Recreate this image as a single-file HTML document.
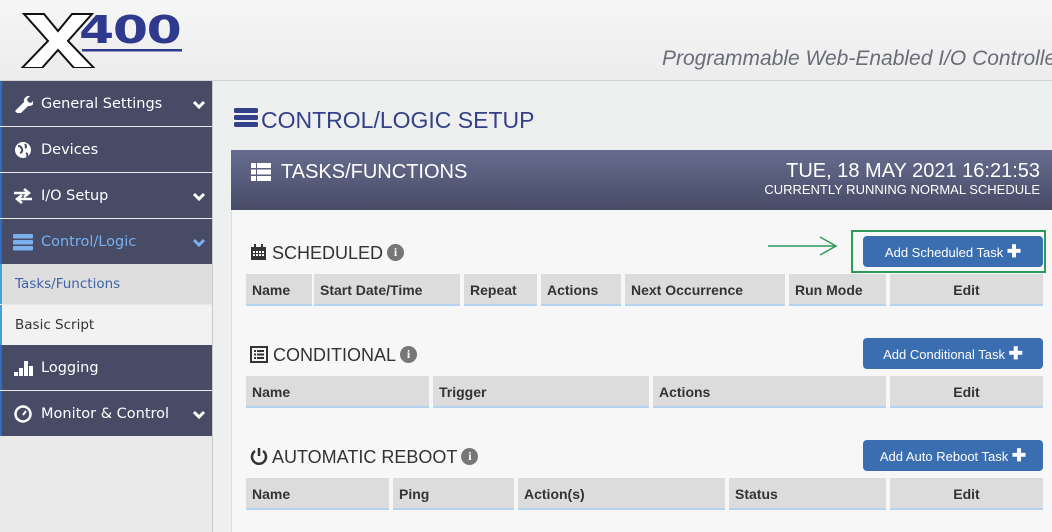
<!DOCTYPE html>
<html><head><meta charset="utf-8"><style>
*{box-sizing:border-box;margin:0;padding:0}
body{width:1052px;height:532px;overflow:hidden;position:relative;font-family:"Liberation Sans",sans-serif;background:#eeefef}
.a{position:absolute}
#hdr{left:0;top:0;width:1052px;height:81px;background:linear-gradient(#f6f6f6,#ececec);border-bottom:1px solid #d4d4d4}
.tag{left:662px;top:47px;font-size:21px;font-style:italic;color:#6a6d78;white-space:nowrap}
#side{left:0;top:81px;width:213px;height:451px;background:#e9e9ea;border-right:1px solid #c9c9c9}
.it{position:absolute;left:0;width:212px;background:#474b66;color:#fff;font-family:"DejaVu Sans",sans-serif;font-size:14.5px;border-left:2px solid #2d6cc0}
.it span{position:absolute;left:39px;top:50%;transform:translateY(-50%)}
.it i{position:absolute;left:11px;top:50%;transform:translateY(-50%);width:20px;height:18px}
.it b{position:absolute;right:6px;top:50%;transform:translateY(-60%);width:14px;height:10px}
.sub{position:absolute;left:0;width:212px;font-family:"DejaVu Sans",sans-serif;font-size:13.5px;border-left:2px solid #45a0e0}
.sub span{position:absolute;left:13px;top:50%;transform:translateY(-50%)}
.ttl{left:261px;top:107px;font-size:23px;color:#34418a}
#pnl{left:231px;top:150px;width:821px;height:382px;background:#f7f7f7;border-left:1px solid #ddd}
#ph{left:231px;top:150px;width:821px;height:60px;background:linear-gradient(#676d8e,#474b66);color:#fff}
.sec{font-size:18px;color:#333;white-space:nowrap}
.th{position:absolute;height:32px;background:#dcdcdc;border-bottom:2px solid #b5d3f0;font-size:14px;font-weight:bold;color:#333;line-height:32px;padding-left:6px}
.btn{position:absolute;left:863px;width:180px;height:31px;background:#3a6eb0;border-radius:4px;color:#fff;font-size:13px;line-height:31px;text-align:center}
.info{display:inline-block;width:17px;height:17px;border-radius:50%;background:#777;color:#fff;font-size:12px;font-weight:bold;text-align:center;line-height:17px;font-family:"Liberation Serif",serif;vertical-align:3px;margin-left:4px}
.logo4{left:79px;top:8px;font-family:"DejaVu Sans",sans-serif;font-weight:bold;font-size:38px;line-height:44px;color:#2f3a8f;transform:scaleX(1.33);transform-origin:left top;letter-spacing:-1px}
</style></head><body>
<div id="hdr" class="a"></div>
<svg class="a" style="left:20px;top:10px" width="170" height="58">
<path d="M4 4h20l14 17 14-17h20l-24 27 26 27h-20l-16-18-16 18h-20l26-27z" fill="#fff" stroke="#111" stroke-width="2"/>
<rect x="62" y="39" width="100" height="2.5" fill="#2f3a8f"/>
</svg>
<div class="a logo4">400</div>
<div class="a tag">Programmable Web-Enabled I/O Controller</div>
<div id="side" class="a"></div>
<div class="it" style="top:81px;height:45px"><i><svg width="20" height="18"><path d="M2 16l9-9a5 5 0 0 1 6-6l-3 3 1 3 3 1 3-3a5 5 0 0 1-6 6l-9 9z" fill="#fff"/></svg></i><span>General Settings</span><b><svg width="14" height="10"><path d="M2 2l5 5 5-5" stroke="#fff" stroke-width="3" fill="none"/></svg></b></div>
<div class="it" style="top:127px;height:45px"><i><svg width="20" height="18"><circle cx="10" cy="9" r="8" fill="#fff"/><path d="M5 5q3 0 4 3t-2 4M12 3q2 3 0 4M13 12q2 1 1 4" stroke="#474b66" stroke-width="2" fill="none"/></svg></i><span>Devices</span></div>
<div class="it" style="top:173px;height:45px"><i><svg width="20" height="18"><path d="M1 6h14M11 2l5 4-5 4M19 12H5M9 8l-5 4 5 4" stroke="#fff" stroke-width="2.5" fill="none"/></svg></i><span>I/O Setup</span><b><svg width="14" height="10"><path d="M2 2l5 5 5-5" stroke="#fff" stroke-width="3" fill="none"/></svg></b></div>
<div class="it" style="top:219px;height:45px;color:#7ab0ee"><i><svg width="20" height="18"><rect x="0" y="1" width="20" height="4.5" rx="1" fill="#7ab0ee"/><rect x="0" y="7" width="20" height="4.5" rx="1" fill="#7ab0ee"/><rect x="0" y="13" width="20" height="4.5" rx="1" fill="#7ab0ee"/></svg></i><span>Control/Logic</span><b><svg width="14" height="10"><path d="M2 2l5 5 5-5" stroke="#7ab0ee" stroke-width="3" fill="none"/></svg></b></div>
<div class="sub" style="top:264px;height:40px;background:#dedede;color:#3f62a8"><span>Tasks/Functions</span></div>
<div class="sub" style="top:305px;height:40px;background:#f2f2f2;color:#333"><span>Basic Script</span></div>
<div class="it" style="top:345px;height:45px"><i><svg width="20" height="18"><g fill="#fff"><rect x="1" y="13" width="4" height="4"/><rect x="6" y="9" width="4" height="8"/><rect x="11" y="2" width="4" height="15"/><rect x="16" y="7" width="4" height="10"/></g></svg></i><span>Logging</span></div>
<div class="it" style="top:391px;height:45px"><i><svg width="20" height="18"><circle cx="10" cy="9" r="7.5" fill="none" stroke="#fff" stroke-width="2.5"/><path d="M10 10l3-4" stroke="#fff" stroke-width="2"/></svg></i><span>Monitor &amp; Control</span><b><svg width="14" height="10"><path d="M2 2l5 5 5-5" stroke="#fff" stroke-width="3" fill="none"/></svg></b></div>
<svg class="a" style="left:234px;top:108px" width="24" height="20"><rect y="0" width="24" height="5" rx="1.5" fill="#34418a"/><rect y="7" width="24" height="5" rx="1.5" fill="#34418a"/><rect y="14" width="24" height="5" rx="1.5" fill="#34418a"/></svg>
<div class="a ttl">CONTROL/LOGIC SETUP</div>
<div id="pnl" class="a"></div>
<div id="ph" class="a">
<svg class="a" style="left:20px;top:13px" width="20" height="18"><g fill="#fff"><rect x="0" y="0" width="5" height="5"/><rect x="6" y="0" width="14" height="5"/><rect x="0" y="6.5" width="5" height="5"/><rect x="6" y="6.5" width="14" height="5"/><rect x="0" y="13" width="5" height="5"/><rect x="6" y="13" width="14" height="5"/></g></svg>
<div class="a" style="left:50px;top:11px;font-size:20px">TASKS/FUNCTIONS</div>
<div class="a" style="right:12px;top:10px;font-size:20px;white-space:nowrap">TUE, 18 MAY 2021 16:21:53</div>
<div class="a" style="right:12px;top:32px;font-size:13px;white-space:nowrap">CURRENTLY RUNNING NORMAL SCHEDULE</div>
</div>
<div class="a sec" style="left:250px;top:243px"><svg width="17" height="17" style="vertical-align:-2px"><rect x="1" y="3" width="15" height="13" fill="#333"/><g fill="#f7f7f7"><rect x="3" y="7" width="2" height="2"/><rect x="6" y="7" width="2" height="2"/><rect x="9" y="7" width="2" height="2"/><rect x="12" y="7" width="2" height="2"/><rect x="3" y="10" width="2" height="2"/><rect x="6" y="10" width="2" height="2"/><rect x="9" y="10" width="2" height="2"/><rect x="12" y="10" width="2" height="2"/></g><rect x="4" y="0" width="2" height="4" fill="#333"/><rect x="11" y="0" width="2" height="4" fill="#333"/></svg> SCHEDULED<span class="info">i</span></div>
<div class="a sec" style="left:250px;top:345px"><svg width="18" height="17" style="vertical-align:-2px"><rect x="1" y="1" width="16" height="15" fill="none" stroke="#333" stroke-width="2"/><g fill="#333"><rect x="4" y="4" width="2" height="2"/><rect x="7" y="4" width="7" height="2"/><rect x="4" y="7.5" width="2" height="2"/><rect x="7" y="7.5" width="7" height="2"/><rect x="4" y="11" width="2" height="2"/><rect x="7" y="11" width="7" height="2"/></g></svg> CONDITIONAL<span class="info">i</span></div>
<div class="a sec" style="left:250px;top:447px"><svg width="18" height="18" style="vertical-align:-2px"><path d="M5 4a7 7 0 1 0 8 0" stroke="#333" stroke-width="2.5" fill="none"/><path d="M9 1v8" stroke="#333" stroke-width="2.5"/></svg> AUTOMATIC REBOOT<span class="info">i</span></div>
<div class="th" style="top:274px;left:246px;width:66px">Name</div>
<div class="th" style="top:274px;left:314px;width:146px">Start Date/Time</div>
<div class="th" style="top:274px;left:464px;width:73px">Repeat</div>
<div class="th" style="top:274px;left:541px;width:80px">Actions</div>
<div class="th" style="top:274px;left:625px;width:160px">Next Occurrence</div>
<div class="th" style="top:274px;left:789px;width:97px">Run Mode</div>
<div class="th" style="top:274px;left:890px;width:153px;text-align:center;padding:0">Edit</div>
<div class="th" style="top:376px;left:246px;width:183px">Name</div>
<div class="th" style="top:376px;left:433px;width:216px">Trigger</div>
<div class="th" style="top:376px;left:653px;width:233px">Actions</div>
<div class="th" style="top:376px;left:890px;width:153px;text-align:center;padding:0">Edit</div>
<div class="th" style="top:478px;left:246px;width:143px">Name</div>
<div class="th" style="top:478px;left:393px;width:121px">Ping</div>
<div class="th" style="top:478px;left:518px;width:207px">Action(s)</div>
<div class="th" style="top:478px;left:729px;width:157px">Status</div>
<div class="th" style="top:478px;left:890px;width:153px;text-align:center;padding:0">Edit</div>
<div class="btn" style="top:236px">Add Scheduled Task <b style="font-size:17px">✚</b></div>
<div class="btn" style="top:338px">Add Conditional Task <b style="font-size:17px">✚</b></div>
<div class="btn" style="top:440px">Add Auto Reboot Task <b style="font-size:17px">✚</b></div>
<div class="a" style="left:851px;top:230px;width:195px;height:43px;border:2px solid #2e9a5a"></div>
<svg class="a" style="left:766px;top:234px" width="74" height="24"><path d="M2 12h68M54 3l16 9-16 9" stroke="#2e9a5a" stroke-width="1.5" fill="none"/></svg>
</body></html>
